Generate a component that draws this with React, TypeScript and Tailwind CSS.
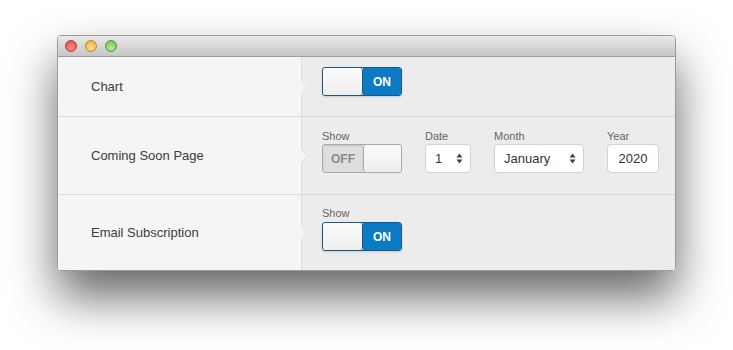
import React from "react";

function Toggle({ on }: { on: boolean }) {
  if (on) {
    return (
      <div className="flex h-[29px] w-[80px] overflow-hidden rounded-[3px] border border-[#1d5684] shadow-[0_1px_2px_rgba(0,0,0,0.15)]">
        <div className="w-[40px] rounded-[3px] border-r border-[#1d5684] bg-gradient-to-b from-[#fbfbfb] to-[#eeeeee]" />
        <div className="flex flex-1 items-center justify-center bg-[#0a7bc4] text-[12px] font-bold text-white">ON</div>
      </div>
    );
  }
  return (
    <div className="flex h-[29px] w-[80px] overflow-hidden rounded-[3px] border border-[#a9a9a9]">
      <div className="flex w-[40px] items-center justify-center bg-[#dedede] text-[12px] font-bold text-[#8a8a8a] shadow-[inset_0_1px_2px_rgba(0,0,0,0.12)]">OFF</div>
      <div className="flex-1 rounded-[3px] border-l border-[#a9a9a9] bg-gradient-to-b from-[#fbfbfb] to-[#eeeeee]" />
    </div>
  );
}

function Arrows() {
  return (
    <svg width="7" height="11" viewBox="0 0 7 11">
      <path d="M3.5 0.5 L6.5 4.5 L0.5 4.5 Z" fill="#444" />
      <path d="M3.5 10.5 L6.5 6.5 L0.5 6.5 Z" fill="#444" />
    </svg>
  );
}

function Notch() {
  return (
    <div className="absolute left-[-1px] top-1/2 -translate-y-1/2">
      <svg width="7" height="14" viewBox="0 0 7 14">
        <path d="M0 0 L6 7 L0 14 Z" fill="#f5f5f5" />
        <path d="M0 0 L6 7 L0 14" fill="none" stroke="#e2e2e2" strokeWidth="1" />
      </svg>
    </div>
  );
}

function Row({
  label,
  children,
  height,
  border = true,
}: {
  label: string;
  children: React.ReactNode;
  height: string;
  border?: boolean;
}) {
  return (
    <div className={`flex ${height} ${border ? "border-b border-[#dadada]" : ""}`}>
      <div className="flex w-[244px] items-center border-r border-[#dcdcdc] bg-[#f5f5f5] pl-[33px] text-[13px] text-[#3c3c3c]">
        {label}
      </div>
      <div className="relative flex-1 bg-[#ececec] pl-[20px]">
        <Notch />
        {children}
      </div>
    </div>
  );
}

function Label({ children }: { children: React.ReactNode }) {
  return <div className="h-[15px] text-[11px] leading-[15px] text-[#666]">{children}</div>;
}

export default function App() {
  return (
    <div className="h-[350px] w-[733px] bg-white pl-[57px] pt-[35px]" style={{ fontFamily: '"Liberation Sans", Arial, sans-serif' }}>
      <div className="w-[619px] overflow-hidden rounded-[4px] border border-[#9a9a9a] shadow-[0_26px_48px_rgba(0,0,0,0.6)]">
        <div className="flex h-[21px] items-center gap-[8px] border-b border-[#9c9c9c] bg-gradient-to-b from-[#e9e9e9] to-[#c6c6c6] pl-[7px]">
          <span className="h-[12px] w-[12px] rounded-full border border-[#b3403f] bg-[radial-gradient(circle_at_50%_70%,#ff8f88,#e0443e)]" />
          <span className="h-[12px] w-[12px] rounded-full border border-[#c08a2b] bg-[radial-gradient(circle_at_50%_70%,#ffe08a,#e9a43a)]" />
          <span className="h-[12px] w-[12px] rounded-full border border-[#5a9a3a] bg-[radial-gradient(circle_at_50%_70%,#b4f09c,#66b84a)]" />
        </div>
        <Row label="Chart" height="h-[60px]">
          <div className="pt-[10px]">
            <Toggle on />
          </div>
        </Row>
        <Row label="Coming Soon Page" height="h-[78px]">
          <div className="flex gap-[23px] pt-[12px]">
            <div className="flex flex-col">
              <Label>Show</Label>
              <Toggle on={false} />
            </div>
            <div className="flex flex-col">
              <Label>Date</Label>
              <div className="flex h-[29px] w-[46px] items-center justify-between rounded-[4px] border border-[#d2d2d2] bg-white pl-[9px] pr-[7px] text-[13px] text-[#333]">
                <span>1</span>
                <Arrows />
              </div>
            </div>
            <div className="flex flex-col">
              <Label>Month</Label>
              <div className="flex h-[29px] w-[90px] items-center justify-between rounded-[4px] border border-[#d2d2d2] bg-white pl-[9px] pr-[7px] text-[13px] text-[#333]">
                <span>January</span>
                <Arrows />
              </div>
            </div>
            <div className="flex flex-col">
              <Label>Year</Label>
              <div className="flex h-[29px] w-[52px] items-center justify-center rounded-[4px] border border-[#d2d2d2] bg-white text-[13px] text-[#333]">
                2020
              </div>
            </div>
          </div>
        </Row>
        <Row label="Email Subscription" height="h-[75px]" border={false}>
          <div className="flex flex-col gap-[1px] pt-[11px]">
            <Label>Show</Label>
            <Toggle on />
          </div>
        </Row>
      </div>
    </div>
  );
}
